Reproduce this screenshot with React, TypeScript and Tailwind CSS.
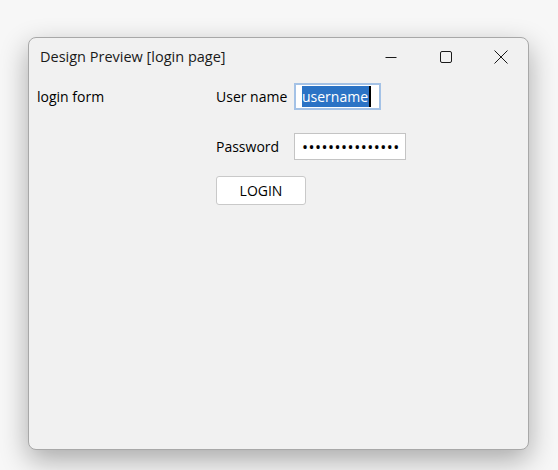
import React from 'react';

const font = { fontFamily: '"Segoe UI", "Open Sans", "Noto Sans", sans-serif' };

const TitleButtons: React.FC = () => (
  <div className="flex items-center h-full">
    <button className="w-[55px] h-full flex items-center justify-center">
      <svg width="12" height="12" viewBox="0 0 12 12">
        <path d="M0.5 6.5h11" stroke="#1a1a1a" strokeWidth="1" />
      </svg>
    </button>
    <button className="w-[55px] h-full flex items-center justify-center">
      <svg width="12" height="12" viewBox="0 0 12 12">
        <rect x="0.5" y="0.5" width="11" height="11" rx="1.5" fill="none" stroke="#1a1a1a" strokeWidth="1" />
      </svg>
    </button>
    <button className="w-[55px] h-full flex items-center justify-center">
      <svg width="14" height="14" viewBox="0 0 14 14">
        <path d="M0.5 0.5l13 13M13.5 0.5l-13 13" stroke="#1a1a1a" strokeWidth="1" />
      </svg>
    </button>
  </div>
);

export default function App() {
  return (
    <div className="w-[558px] h-[470px] bg-[#f7f7f7] pt-[37px] pl-[28px]" style={font}>
      <div className="w-[501px] h-[413px] bg-[#f1f1f1] border border-[#a8a8a8] rounded-[8px] shadow-[0_10px_28px_rgba(0,0,0,0.32)] flex flex-col text-[#000] text-[14px]">
        <div className="h-[40px] flex items-start justify-between pl-[11px]">
          <span className="text-[#1a1a1a] text-[14.5px] leading-[20px] mt-[9px]">Design Preview [login page]</span>
          <div className="h-[38px]">
            <TitleButtons />
          </div>
        </div>
        <div className="flex pl-[8px] pt-[5px]">
          <div className="w-[179px] pt-[4px] leading-[20px]">login form</div>
          <div className="flex flex-col">
            <div className="flex items-center h-[27px]">
              <span className="w-[78px]">User name</span>
              <div className="w-[87px] h-[27px] border-2 border-[#a4c2e6] bg-white flex items-center px-[6px]">
                <span className="bg-[#2b73c5] text-white leading-[21px] pr-[1px] border-r-2 border-black">username</span>
              </div>
            </div>
            <div className="flex items-center h-[27px] mt-[23px]">
              <span className="w-[78px]">Password</span>
              <div className="w-[112px] h-[27px] border border-[#c4c4c4] bg-white flex items-center pl-[7px] overflow-hidden whitespace-nowrap text-[16px] tracking-[0.5px]">
                •••••••••••••••
              </div>
            </div>
            <button className="mt-[16px] w-[90px] h-[29px] border border-[#c9c9c9] rounded-[3px] bg-white flex items-center justify-center">
              LOGIN
            </button>
          </div>
        </div>
      </div>
    </div>
  );
}
